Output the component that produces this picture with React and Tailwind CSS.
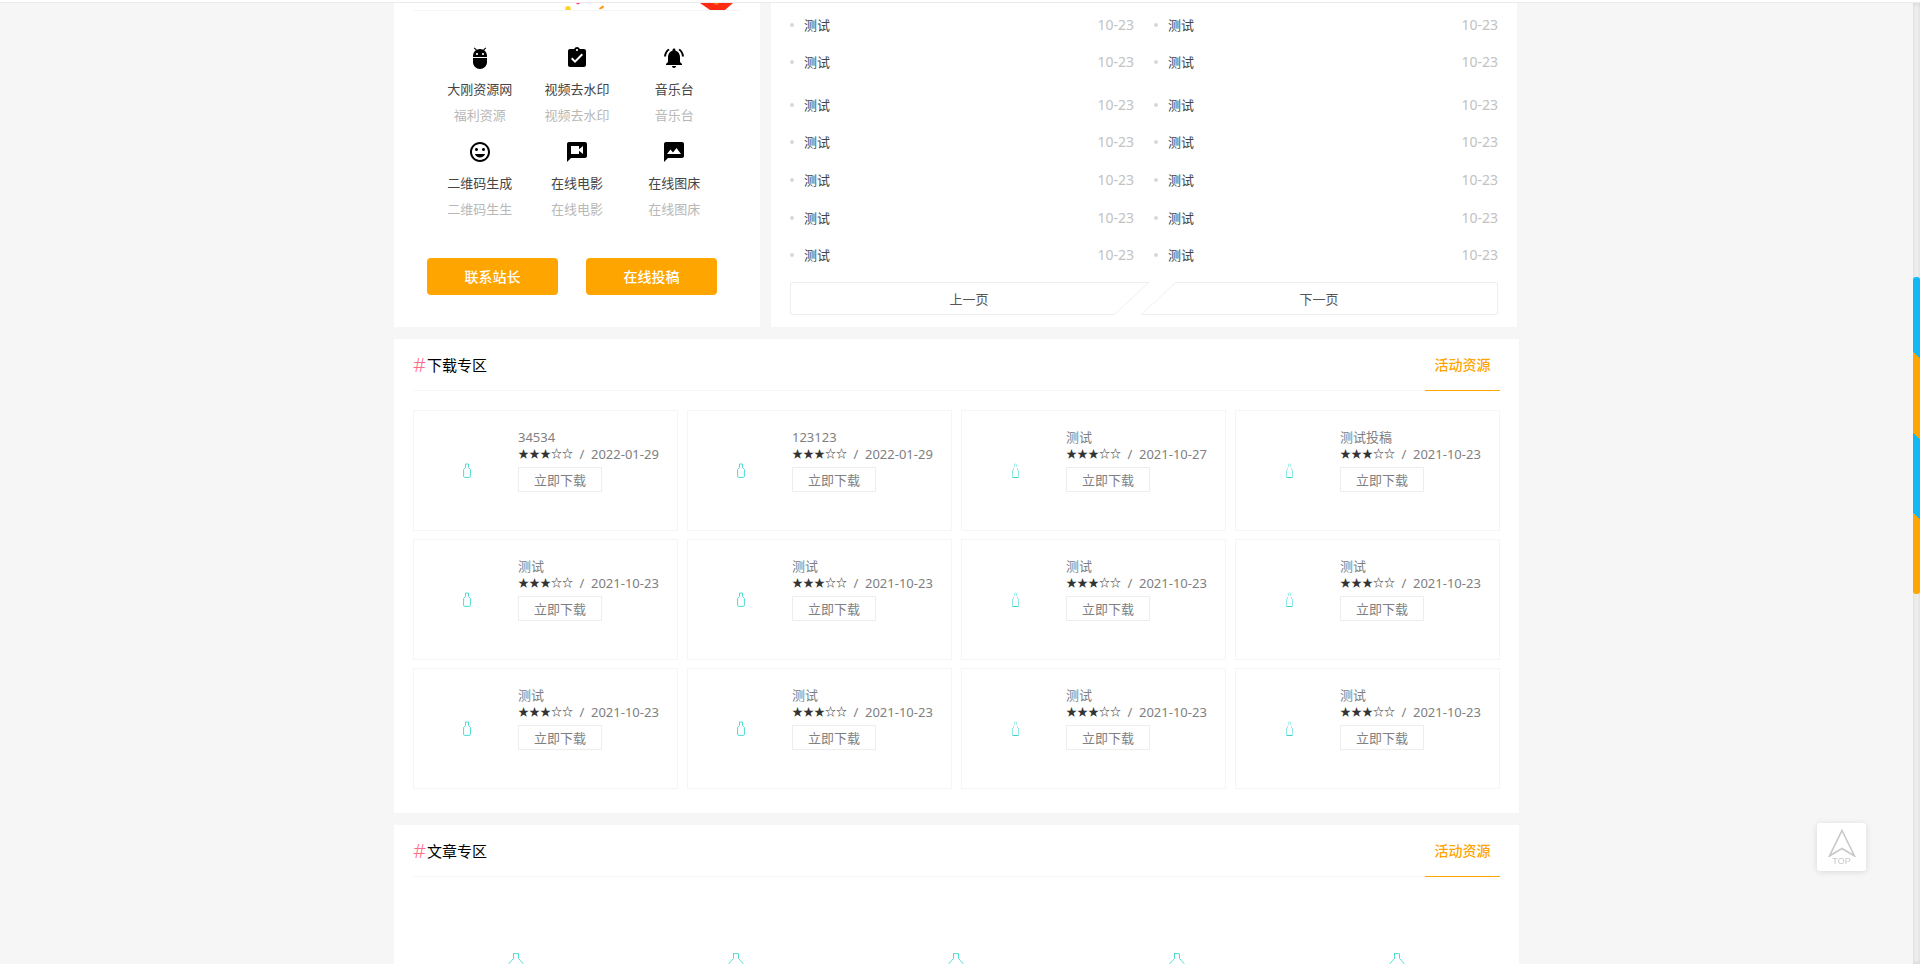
import {
  MdAdb,
  MdAssignmentTurnedIn,
  MdNotificationsActive,
  MdMood,
  MdMms,
} from 'react-icons/md';

function VideoBubble({ className }) {
  return (
    <svg viewBox="0 0 24 24" className={className} fill="currentColor" aria-hidden="true">
      <path d="M20 2H4c-1.100 0-1.990.9-1.990 2L2 22l4-4h14c1.100 0 2-.9 2-2V4c0-1.100-.9-2-2-2zm-2 12l-4-3.200V14H6V6h8v3.200L18 6v8z" />
    </svg>
  );
}

const tools = [
  { icon: MdAdb, title: '大刚资源网', note: '福利资源' },
  { icon: MdAssignmentTurnedIn, title: '视频去水印', note: '视频去水印' },
  { icon: MdNotificationsActive, title: '音乐台', note: '音乐台' },
  { icon: MdMood, title: '二维码生成', note: '二维码生生' },
  { icon: VideoBubble, title: '在线电影', note: '在线电影' },
  { icon: MdMms, title: '在线图床', note: '在线图床' },
];

const downloads = [
  { title: '34534', date: '2022-01-29' },
  { title: '123123', date: '2022-01-29' },
  { title: '测试', date: '2021-10-27' },
  { title: '测试投稿', date: '2021-10-23' },
  ...Array.from({ length: 8 }, () => ({ title: '测试', date: '2021-10-23' })),
];

function Confetti() {
  return (
    <svg viewBox="0 0 328 7" className="block h-[7px] w-full" preserveAspectRatio="none" aria-hidden="true">
      <circle cx="155" cy="5.6" r="2.7" fill="#ffd21f" />
      <path d="M163 0h4l-1 1.2h-2z" fill="#ff3d6e" />
      <path d="M186 5.2l3.6-2.6 1.6 1-1 1.6-3.4 1.4z" fill="#ff9a1a" />
      <path d="M287 0h33l-8 7h-15z" fill="#ff2a12" />
      <path d="M300 0h6l-1 1.4h-2.500z" fill="#ff7a12" />
    </svg>
  );
}

function Bottle({ slim }) {
  return slim ? (
    <svg viewBox="0 0 7 15" className="h-[15px] w-[7px]" fill="none" aria-hidden="true">
      <path d="M2.500 1h2M2.500 1v3M4.500 1v3" stroke="#a8f0ec" />
      <path d="M.5 7v7M6.500 7v7" stroke="#8fe8e2" />
      <path d="M1 6h1M5 6h1M.5 14.500h6" stroke="#3ed3c9" />
    </svg>
  ) : (
    <svg viewBox="0 0 8 15" className="h-[15px] w-[8px]" fill="none" aria-hidden="true">
      <path d="M2.500 1h3" stroke="#4cdcd3" />
      <path d="M2.500 1v3.500L.6 6.500v6.700q0 1.200 1.200 1.200h4.400q1.200 0 1.200-1.200V6.500L5.500 4.500V1" stroke="#4cdcd3" />
    </svg>
  );
}

function ListGroup({ count, className }) {
  return (
    <ul className={`grid auto-rows-fr ${className}`}>
      {Array.from({ length: count }, (_, i) => (
        <li key={i} className="grid grid-cols-2 items-center gap-5">
          {[0, 1].map((c) => (
            <div key={c} className="flex items-center">
              <span className="mr-[10px] size-1 rounded-full bg-[#d8d8d8]" />
              <a href="#" className="flex-1 text-[#444]">测试</a>
              <time className="text-sm leading-4 text-[#c2c2c2]">10-23</time>
            </div>
          ))}
        </li>
      ))}
    </ul>
  );
}

function SectionHeader({ title }) {
  return (
    <header className="flex h-[52px] items-stretch justify-between border-b border-[#f5f5f5]">
      <h2 className="flex items-center gap-[2px] text-[15px] text-black">
        <span className="w-3 text-xl leading-5 font-light text-[#ff6b8a]">#</span>
        {title}
      </h2>
      <a
        href="#"
        className="-mb-px flex w-[75px] items-center justify-center border-b border-[#ffa500] pt-px text-sm font-medium text-[#ffa500]"
      >
        活动资源
      </a>
    </header>
  );
}

export default function App() {
  return (
    <div className="flex h-screen flex-col overflow-hidden bg-[#f6f6f6] font-['Noto_Sans','Noto_Sans_CJK_SC',sans-serif] text-[13px] leading-4">
      <div className="h-[3px] shrink-0 border-b border-[#ebebeb] bg-white" />
      <div className="flex min-h-0 flex-1">
        <main className="min-w-0 flex-1 overflow-hidden">
          <div className="mx-auto flex w-full max-w-[1125px] flex-col gap-3">
            <div className="flex gap-[11px] pr-[2px]">
              <section className="w-[366px] shrink-0 bg-white px-[19px] pb-8">
                <div className="border-b border-[#f5f5f5]">
                  <Confetti />
                </div>
                <ul className="grid grid-cols-3 px-[18px] pt-[35px]">
                  {tools.map(({ icon: Icon, title, note }) => (
                    <li key={title} className="flex h-[94px] flex-col items-center">
                      <a href="#" className="flex flex-col items-center text-[#444]">
                        <Icon className="size-6 text-black" />
                        <span className="mt-[11px]">{title}</span>
                        <span className="mt-[10px] text-[#b8b8b8]">{note}</span>
                      </a>
                    </li>
                  ))}
                </ul>
                <div className="mt-6 flex gap-7 px-[14px]">
                  <button className="h-[37px] w-[131px] rounded bg-[#ffa500] text-sm font-medium text-white">联系站长</button>
                  <button className="h-[37px] w-[131px] rounded bg-[#ffa500] text-sm font-medium text-white">在线投稿</button>
                </div>
              </section>

              <section className="min-w-0 flex-1 bg-white px-[19px] pt-[3px] pb-3">
                <ListGroup count={2} className="h-[75px]" />
                <ListGroup count={5} className="mt-[5px] h-[188px]" />
                <nav className="mt-2 flex">
                  <button className="relative h-[33px] flex-1 text-[#555] before:absolute before:inset-y-0 before:left-0 before:w-20 before:rounded-l-[3px] before:border before:border-r-0 before:border-[#eee] after:absolute after:inset-y-0 after:right-4 after:left-10 after:-skew-x-[47deg] after:border after:border-l-0 after:border-[#eee]">
                    上一页
                  </button>
                  <button className="relative -ml-2 h-[33px] flex-1 text-[#555] before:absolute before:inset-y-0 before:right-0 before:w-20 before:rounded-r-[3px] before:border before:border-l-0 before:border-[#eee] after:absolute after:inset-y-0 after:right-10 after:left-[18px] after:-skew-x-[47deg] after:border after:border-r-0 after:border-[#eee]">
                    下一页
                  </button>
                </nav>
              </section>
            </div>

            <section className="bg-white px-[19px] pb-6">
              <SectionHeader title="下载专区" />
              <ul className="mt-[19px] grid grid-cols-4 gap-x-[9px] gap-y-2">
                {downloads.map((d, i) => (
                  <li key={i} className="flex h-[121px] border border-[#f5f5f5]">
                    <div className="ml-[13px] flex w-20 shrink-0 items-center justify-center">
                      <Bottle slim={i % 4 > 1} />
                    </div>
                    <div className="ml-[11px] flex flex-col items-start pt-[18px] text-[#808080]">
                      <h3>{d.title}</h3>
                      <p className="mt-px mb-[5px] flex items-center whitespace-nowrap">
                        <span className="text-[11px] text-[#333]">★★★☆☆</span>
                        <span className="w-[18px] text-center">/</span>
                        <time>{d.date}</time>
                      </p>
                      <button className="h-[25px] w-[84px] border border-[#eee]">立即下载</button>
                    </div>
                  </li>
                ))}
              </ul>
            </section>

            <section className="bg-white px-[19px] pb-6">
              <SectionHeader title="文章专区" />
              <ul className="mt-[19px] grid grid-cols-5 gap-[14px]">
                {[0, 1, 2, 3, 4].map((i) => (
                  <li key={i} className="flex h-[150px] justify-center pt-[57px]">
                    <svg viewBox="0 0 32 44" className="h-11 w-8" fill="none" stroke="#4cdcd3" aria-hidden="true">
                      <path d="M13 .6h5.500M13.500 1v4.500Q12 7 9 10.500L6 15v24q0 4 4 4h12q4 0 4-4V15l-3-4.500Q20 7 18.500 5.500V1" />
                    </svg>
                  </li>
                ))}
              </ul>
            </section>
          </div>
        </main>

        <div className="w-[7px] shrink-0 bg-[#f3f3f3] pt-[274px] shadow-[inset_0_0_5px_rgba(0,0,0,0.15)]">
          <div className="h-[317px] rounded-[3px] bg-[linear-gradient(45deg,#ffa500_25%,#12b7f5_25%,#12b7f5_50%,#ffa500_50%,#ffa500_75%,#12b7f5_75%)]" />
        </div>
      </div>

      <button
        className="fixed right-[54px] bottom-[93px] flex h-12 w-[49px] flex-col items-center rounded-[3px] bg-white pt-[6px] text-[#c8c8c8] shadow-[0_1px_6px_rgba(0,0,0,0.12)]"
      >
        <svg viewBox="0 0 28 28" className="h-7 w-7 shrink-0" fill="none" stroke="currentColor" strokeWidth="1.6" aria-hidden="true">
          <path d="M14 1.500L26.500 27 14 19.500 1.500 27z" />
        </svg>
        <span className="font-['Liberation_Sans',sans-serif] text-[9px] leading-[9px]">TOP</span>
      </button>
    </div>
  );
}
